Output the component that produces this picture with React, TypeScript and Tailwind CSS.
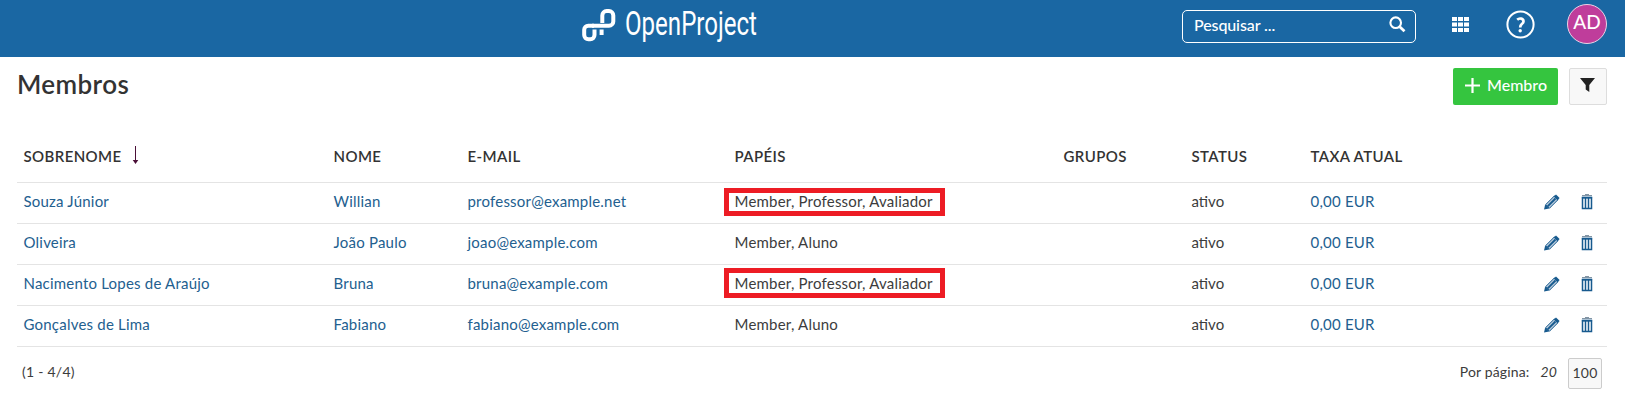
import React from 'react';

const COLS = 'grid grid-cols-[310px_134px_267px_329px_128px_119px_1fr]';

type Member = {
  last: string;
  first: string;
  mail: string;
  roles: string;
  mark?: string;
};

const members: Member[] = [
  { last: 'Souza Júnior', first: 'Willian', mail: 'professor@example.net', roles: 'Member, Professor, Avaliador', mark: 'top-[5px] h-[28px]' },
  { last: 'Oliveira', first: 'João Paulo', mail: 'joao@example.com', roles: 'Member, Aluno' },
  { last: 'Nacimento Lopes de Araújo', first: 'Bruna', mail: 'bruna@example.com', roles: 'Member, Professor, Avaliador', mark: 'top-[3px] h-[30px]' },
  { last: 'Gonçalves de Lima', first: 'Fabiano', mail: 'fabiano@example.com', roles: 'Member, Aluno' },
];

function Logo() {
  return (
    <svg width="186" height="50" viewBox="0 -4 186 50" className="mt-[1px] -mr-[10px] ml-[581px] shrink-0 overflow-visible" fill="none">
      <g stroke="#fff" strokeWidth="4">
        <path d="M13 20.700H7.200a4 4 0 0 0-4 4V30a4.200 4.200 0 0 0 4.200 4.200H9.300a4.200 4.200 0 0 0 4.200-4.200V24.500" />
        <path d="M11 20.700H28a4.300 4.300 0 0 0 4.300-4.300V10.400a4.300 4.300 0 0 0-4.300-4.300H25.600a4.300 4.300 0 0 0-4.300 4.300V18" />
        <path d="M20.600 24.500V30" />
      </g>
      <text x="44" y="29.500" fill="#fff" fontSize="34" textLength="132" lengthAdjust="spacingAndGlyphs" className="font-['Roboto',sans-serif] font-normal">
        OpenProject
      </text>
    </svg>
  );
}

function Pencil() {
  return (
    <svg width="16" height="16" viewBox="0 0 16 16" fill="none">
      <path d="M0 15.500L1.200 10.600L5.200 14.500Z" fill="#175a8e" />
      <path d="M1.700 10.600L10.300 2L14 5.700L5.400 14.300Z" fill="#b9cbdc" stroke="#175a8e" strokeWidth="1" />
      <path d="M3.600 12.400L11.500 4.500" stroke="#175a8e" strokeWidth="1.900" />
      <path d="M9.800 2.500L12 0.400L15.600 4L13.500 6.200Z" fill="#175a8e" />
    </svg>
  );
}

function Trash() {
  return (
    <svg width="12" height="16" viewBox="0 0 12 16" fill="none">
      <path d="M1 1.500H11M4 .7H8" stroke="#8295a5" strokeWidth="1.200" />
      <path d="M1.500 3.500V14.500H10.500V3.500ZM4.500 3.500V14.500M7.500 3.500V14.500" stroke="#175a8e" strokeWidth="1.500" />
      <path d="M.9 3.700H11.100" stroke="#175a8e" strokeWidth="1.700" />
    </svg>
  );
}

export default function App() {
  return (
    <div className="h-[406px] w-[1625px] overflow-hidden bg-white font-['Lato',sans-serif] text-[15px] text-[#3c3c3c]">
      <header className="flex h-[57px] items-start bg-[#1a67a3] text-white">
        <Logo />
        <div className="mt-[10px] ml-[425px] flex h-[33px] w-[234px] items-center justify-between rounded-[5px] border border-white pr-[9px] pl-[11px]">
          <span className="-mt-[4px] text-[16px] leading-none font-medium tracking-[-0.1px]">Pesquisar ...</span>
          <svg width="17" height="17" viewBox="0 0 17 17" fill="none" stroke="#fff" className="-mt-[4px]">
            <circle cx="6.700" cy="6.700" r="5.300" strokeWidth="2.100" />
            <path d="M10.700 10.700L15.500 15.200" strokeWidth="2.800" />
          </svg>
        </div>
        <svg width="17" height="15" viewBox="0 0 17 15" fill="#fff" className="mt-[17px] ml-[36px] shrink-0">
          <path d="M0 0h5v4H0zM6 0h5v4H6zM12 0h5v4H12zM0 5.500h5v4H0zM6 5.500h5v4H6zM12 5.500h5v4H12zM0 11h5v4H0zM6 11h5v4H6zM12 11h5v4H12z" />
        </svg>
        <svg width="29" height="30" viewBox="0 0 29 30" fill="none" stroke="#fff" className="mt-[10px] ml-[36.500px] shrink-0">
          <circle cx="14.500" cy="14.500" r="13.100" strokeWidth="2" />
          <path d="M11.200 9.700C13.300 7.700 17.500 8.300 17.500 11.400C17.500 14 14.200 13.800 14.200 17.400" strokeWidth="2.700" />
          <circle cx="14.200" cy="20.700" r="1.700" fill="#fff" stroke="none" />
        </svg>
        <div className="mt-[4px] ml-[32.500px] flex size-[40px] items-center justify-center rounded-full border border-[#e9d3e6] bg-[#bf3d9b] pb-[3px] text-[19px] font-medium">
          AD
        </div>
      </header>

      <div className="flex h-[73px] items-start justify-between pr-[18px] pl-[17px]">
        <h1 className="mt-[10px] text-[26px] leading-[34px] font-semibold tracking-[0.4px] text-[#333]">Membros</h1>
        <div className="mt-[11px] flex gap-[11px]">
          <button className="flex h-[37px] w-[105px] items-center rounded-[2px] bg-[#35c53f] pb-[3px] pl-[12px] text-[16px] font-medium text-white">
            <svg width="15" height="15" viewBox="0 0 15 15" stroke="#fff" strokeWidth="2.200" className="mt-px mr-[7px]">
              <path d="M7.500 0V15M0 7.500H15" />
            </svg>
            Membro
          </button>
          <button className="flex h-[37px] w-[38px] items-center justify-center rounded-[2px] border border-[#ddd] bg-[#f8f8f8] pr-px pb-[3px]">
            <svg width="15" height="14" viewBox="0 0 15 14" fill="#222">
              <path d="M0 0H15L9.300 7V14L5.700 11.500V7Z" />
            </svg>
          </button>
        </div>
      </div>

      <main className="ml-[17px] w-[1590px]">
        <div className={`${COLS} h-[53px] items-center border-b border-[#e4e4e4] pt-[1px] text-[15px] font-semibold tracking-[0.400px] text-[#333] [&>*]:pl-[6.500px]`}>
          <div className="flex items-center">
            SOBRENOME
            <svg width="7" height="19" viewBox="0 0 7 19" className="-mt-[2px] ml-[10px]" fill="#4b1038">
              <path d="M3 0H4V14H6.300L3.500 18L.7 14H3Z" />
            </svg>
          </div>
          <span>NOME</span>
          <span>E-MAIL</span>
          <span>PAPÉIS</span>
          <span>GRUPOS</span>
          <span>STATUS</span>
          <span>TAXA ATUAL</span>
        </div>
        {members.map((m) => (
          <div key={m.last} className={`${COLS} h-[41px] items-center border-b border-[#e4e4e4] tracking-[0.210px] text-[#23608f] [&>*]:pb-[4px] [&>*]:pl-[6.500px]`}>
            <span>{m.last}</span>
            <span>{m.first}</span>
            <span>{m.mail}</span>
            <div className="relative flex h-full items-center text-[#3c3c3c]">
              {m.roles}
              {m.mark && <div className={`absolute -left-[4px] w-[221px] border-[5px] border-[#ed1c24] ${m.mark}`} />}
            </div>
            <span />
            <span className="tracking-normal text-[#3c3c3c]">ativo</span>
            <div className="flex items-center">
              <span>0,00 EUR</span>
              <div className="mt-px ml-auto flex items-center gap-[21px] pr-[14px]">
                <Pencil />
                <Trash />
              </div>
            </div>
          </div>
        ))}
        <footer className="flex h-[54px] items-center justify-between pr-[5px] pb-px pl-[5px] text-[14px] tracking-[0.15px]">
          <span className="-mt-[4px] tracking-[0.25px]">(1 - 4/4)</span>
          <div className="flex items-center">
            <span className="-mt-[4px]">Por página:</span>
            <span className="-mt-[4px] ml-[11px] italic">20</span>
            <span className="ml-[11px] flex h-[31px] w-[34px] items-center justify-center rounded-[2px] border border-[#ccc] bg-[#f8f8f8] pb-[3px]">100</span>
          </div>
        </footer>
      </main>
    </div>
  );
}
